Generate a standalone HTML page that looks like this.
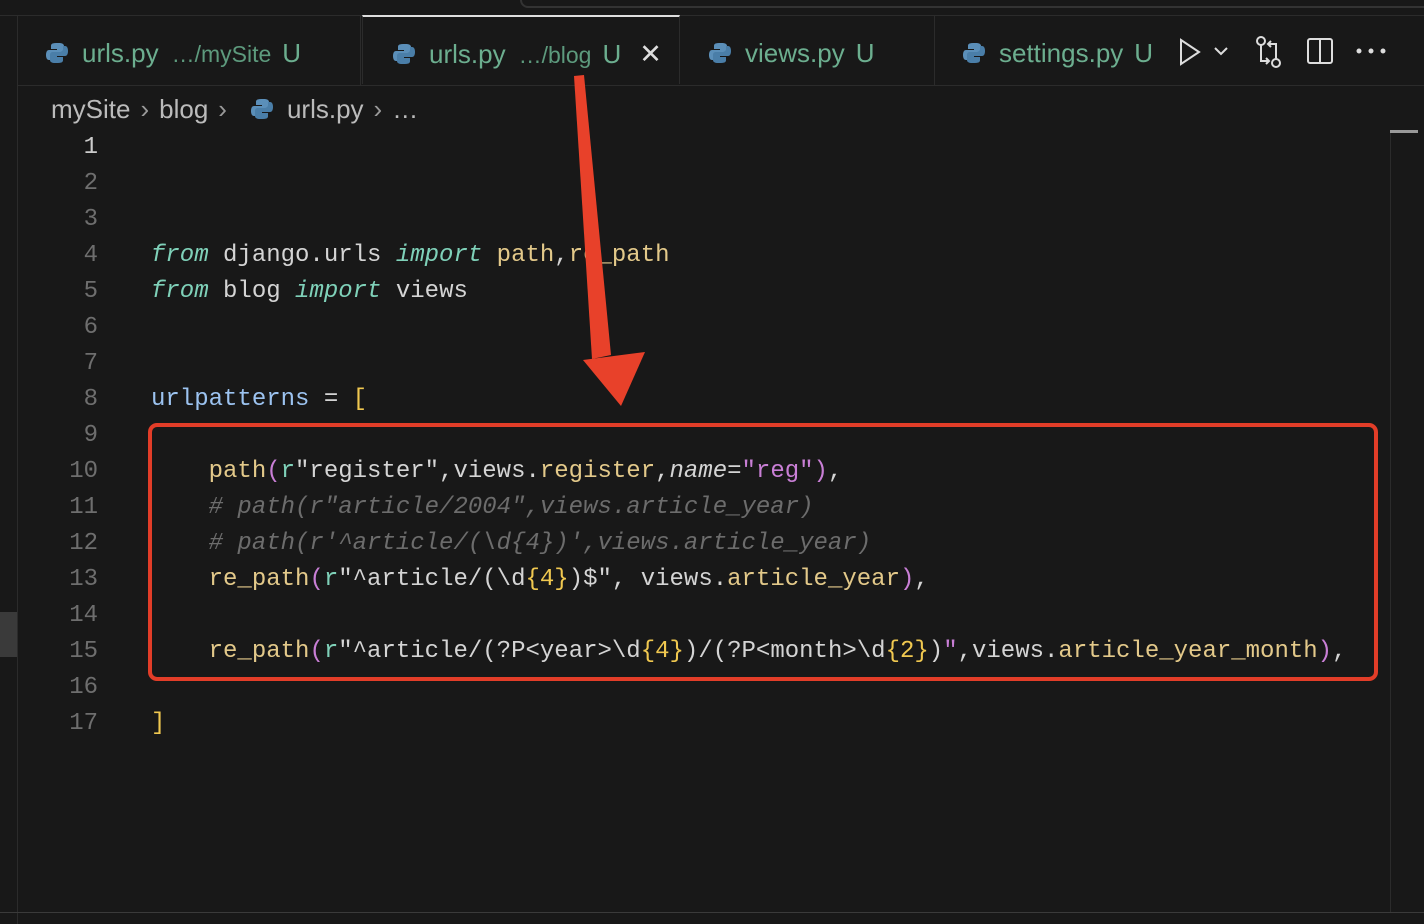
<!DOCTYPE html>
<html><head><meta charset="utf-8"><style>
body{margin:0;width:1424px;height:924px;background:#181818;overflow:hidden;position:relative;font-family:"Liberation Sans",sans-serif}
.top{position:absolute;left:0;top:0;width:1424px;height:15px;background:#181818;border-bottom:1px solid #2b2b2b}
.side{position:absolute;left:0;top:16px;width:17px;height:908px;background:#181818;border-right:1px solid #2b2b2b}
.tabbar{position:absolute;left:18px;top:16px;width:1406px;height:69px;border-bottom:1px solid #2b2b2b;background:#181818}
.tab{position:absolute;top:0;height:69px;border-right:1px solid #2b2b2b;color:#6cae8f;font-size:26px;line-height:74px;white-space:nowrap}
.tab .d{font-size:23px;color:#5d9a7d;margin-left:13px}
.tab .u{margin-left:11px}
.py{display:inline-block;vertical-align:middle;margin-right:14px;margin-top:-4px}
.crumb{position:absolute;left:51px;top:92px;color:#bbb;font-size:26px;line-height:34px;white-space:nowrap}
.crumb .ch{color:#999;margin:0 10px}
.code{position:absolute;left:0;top:130px;font-family:"Liberation Mono",monospace;font-size:24px;line-height:36px;color:#d4d4d4;white-space:pre}
.ln{position:absolute;left:40px;width:58px;text-align:right;color:#6e6e6e}
.tx{position:absolute;left:151px}
.k{color:#7fd1b9;font-style:italic}.f{color:#e3c98a}.v{color:#9cc3f0}.y{color:#f0c850}.p{color:#c97fd6}.c{color:#6c6c6c;font-style:italic}.s{color:#d4d4d4}.r{color:#7fd1b9}
</style></head><body>
<div class="top"></div>
<div style="position:absolute;left:520px;top:-10px;width:940px;height:14px;border:2px solid #333;border-radius:8px"></div>
<div class="side"></div>
<div style="position:absolute;left:0;top:612px;width:17px;height:45px;background:#3a3a3a"></div>
<div class="tabbar">
 <div class="tab" style="left:0;width:343px;padding-left:28px;box-sizing:border-box"><svg class="py" width="22" height="22" viewBox="0 0 22 22"><path d="M10 1c-5 0-5 2-5 3v3h6v1H3c-2 0-3 2-3 5s1 5 3 5h2v-3c0-2 2-3 4-3h6c2 0 3-1 3-3V4c0-2-2-3-5-3z" fill="#5b8fb9"/><path d="M12 21c5 0 5-2 5-3v-3h-6v-1h8c2 0 3-2 3-5s-1-5-3-5h-2v3c0 2-2 3-4 3H7c-2 0-3 1-3 3v5c0 2 2 3 5 3z" fill="#4a7ea8"/></svg>urls.py<span class="d">…/mySite</span><span class="u">U</span></div>
 <div class="tab" style="left:344px;width:318px;padding-left:30px;box-sizing:border-box;border-top:2px solid #ddd;top:-1px;border-left:1px solid #2b2b2b"><svg class="py" width="22" height="22" viewBox="0 0 22 22"><path d="M10 1c-5 0-5 2-5 3v3h6v1H3c-2 0-3 2-3 5s1 5 3 5h2v-3c0-2 2-3 4-3h6c2 0 3-1 3-3V4c0-2-2-3-5-3z" fill="#5b8fb9"/><path d="M12 21c5 0 5-2 5-3v-3h-6v-1h8c2 0 3-2 3-5s-1-5-3-5h-2v3c0 2-2 3-4 3H7c-2 0-3 1-3 3v5c0 2 2 3 5 3z" fill="#4a7ea8"/></svg>urls.py<span class="d">…/blog</span><span class="u">U</span><span style="color:#ddd;margin-left:18px;font-size:27px">✕</span></div>
 <div class="tab" style="left:663px;width:254px;padding-left:28px;box-sizing:border-box"><svg class="py" width="22" height="22" viewBox="0 0 22 22"><path d="M10 1c-5 0-5 2-5 3v3h6v1H3c-2 0-3 2-3 5s1 5 3 5h2v-3c0-2 2-3 4-3h6c2 0 3-1 3-3V4c0-2-2-3-5-3z" fill="#5b8fb9"/><path d="M12 21c5 0 5-2 5-3v-3h-6v-1h8c2 0 3-2 3-5s-1-5-3-5h-2v3c0 2-2 3-4 3H7c-2 0-3 1-3 3v5c0 2 2 3 5 3z" fill="#4a7ea8"/></svg>views.py<span class="u">U</span></div>
 <div class="tab" style="left:918px;width:250px;padding-left:27px;box-sizing:border-box;border-right:none"><svg class="py" width="22" height="22" viewBox="0 0 22 22"><path d="M10 1c-5 0-5 2-5 3v3h6v1H3c-2 0-3 2-3 5s1 5 3 5h2v-3c0-2 2-3 4-3h6c2 0 3-1 3-3V4c0-2-2-3-5-3z" fill="#5b8fb9"/><path d="M12 21c5 0 5-2 5-3v-3h-6v-1h8c2 0 3-2 3-5s-1-5-3-5h-2v3c0 2-2 3-4 3H7c-2 0-3 1-3 3v5c0 2 2 3 5 3z" fill="#4a7ea8"/></svg>settings.py<span class="u">U</span></div>
</div>
<svg style="position:absolute;left:1170px;top:30px" width="230" height="45" viewBox="0 0 230 45" fill="none" stroke="#ddd" stroke-width="2">
 <path d="M11 10l18 12-18 12z"/>
 <path d="M45 18l6 6 6-6"/>
 <circle cx="91" cy="11" r="4"/><path d="M91 15v16h8M96 28l3 3-3 3"/>
 <circle cx="106" cy="33" r="4"/><path d="M106 29V14h-8M101 11l-3 3 3 3"/>
 <rect x="138" y="9" width="24" height="24" rx="2"/><path d="M150 9v24"/>
 <circle cx="189" cy="21" r="1.5" fill="#ddd"/><circle cx="201" cy="21" r="1.5" fill="#ddd"/><circle cx="213" cy="21" r="1.5" fill="#ddd"/>
</svg>
<div class="crumb">mySite<span class="ch">›</span>blog<span class="ch">›</span><svg class="py" style="margin-right:14px;margin-left:14px" width="22" height="22" viewBox="0 0 22 22"><path d="M10 1c-5 0-5 2-5 3v3h6v1H3c-2 0-3 2-3 5s1 5 3 5h2v-3c0-2 2-3 4-3h6c2 0 3-1 3-3V4c0-2-2-3-5-3z" fill="#5b8fb9"/><path d="M12 21c5 0 5-2 5-3v-3h-6v-1h8c2 0 3-2 3-5s-1-5-3-5h-2v3c0 2-2 3-4 3H7c-2 0-3 1-3 3v5c0 2 2 3 5 3z" fill="#4a7ea8"/></svg>urls.py<span class="ch">›</span>…</div>
<div style="position:absolute;left:1390px;top:130px;width:1px;height:782px;background:#2b2b2b"></div>
<div style="position:absolute;left:1390px;top:130px;width:28px;height:3px;background:#999"></div>
<div style="position:absolute;left:0;top:912px;width:1424px;height:1px;background:#3a3a3a"></div>
<div class="code">
<div class="ln" style="top:0;color:#ccc">1</div><div class="ln" style="top:36px">2</div><div class="ln" style="top:72px">3</div><div class="ln" style="top:108px">4</div><div class="ln" style="top:144px">5</div><div class="ln" style="top:180px">6</div><div class="ln" style="top:216px">7</div><div class="ln" style="top:252px">8</div><div class="ln" style="top:288px">9</div><div class="ln" style="top:324px">10</div><div class="ln" style="top:360px">11</div><div class="ln" style="top:396px">12</div><div class="ln" style="top:432px">13</div><div class="ln" style="top:468px">14</div><div class="ln" style="top:504px">15</div><div class="ln" style="top:540px">16</div><div class="ln" style="top:576px">17</div>
<div class="tx" style="top:108px"><span class="k">from</span> django.urls <span class="k">import</span> <span class="f">path</span>,<span class="f">re_path</span></div>
<div class="tx" style="top:144px"><span class="k">from</span> blog <span class="k">import</span> views</div>
<div class="tx" style="top:252px"><span class="v">urlpatterns</span> = <span class="y">[</span></div>
<div class="tx" style="top:324px">    <span class="f">path</span><span class="p">(</span><span class="r">r</span>"register",views.<span class="f">register</span>,<i>name</i>=<span class="p">"reg"</span><span class="p">)</span>,</div>
<div class="tx" style="top:360px"><span class="c">    # path(r"article/2004",views.article_year)</span></div>
<div class="tx" style="top:396px"><span class="c">    # path(r'^article/(\d{4})',views.article_year)</span></div>
<div class="tx" style="top:432px">    <span class="f">re_path</span><span class="p">(</span><span class="r">r</span>"^article/(\d<span class="y">{4}</span>)$", views.<span class="f">article_year</span><span class="p">)</span>,</div>
<div class="tx" style="top:504px">    <span class="f">re_path</span><span class="p">(</span><span class="r">r</span>"^article/(?P&lt;year&gt;\d<span class="y">{4}</span>)/(?P&lt;month&gt;\d<span class="y">{2}</span>)<span class="p">"</span>,views.<span class="f">article_year_month</span><span class="p">)</span>,</div>
<div class="tx" style="top:576px"><span class="y">]</span></div>
</div>
<div style="position:absolute;left:148px;top:423px;width:1222px;height:250px;border:4px solid #e23d28;border-radius:9px"></div>
<svg style="position:absolute;left:0;top:0" width="1424" height="924"><path d="M583 360l62-8-24 54z" fill="#e8412a"/><path d="M574 76l10-1 27 280-19 4z" fill="#e8412a"/></svg>
</body></html>
